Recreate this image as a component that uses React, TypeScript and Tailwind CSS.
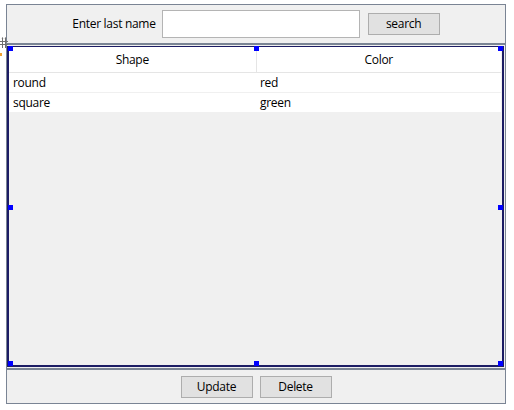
import * as React from "react"

const ROWS = [
  { shape: "round", color: "red" },
  { shape: "square", color: "green" },
]

function Handle({ className }: { className: string }) {
  return <div className={`absolute h-[5px] w-[5px] bg-[#0000ff] ${className}`} />
}

export default function App() {
  return (
    <div
      className="relative h-[410px] w-[514px] bg-white text-[12px] tracking-[-0.3px] text-black"
      style={{ fontFamily: '"Segoe UI", "Open Sans", "Noto Sans", sans-serif' }}
    >
      {/* designer move glyph */}
      <svg className="absolute left-0 top-[33px]" width="8" height="12" viewBox="0 0 8 12">
        <path d="M2.5 1v10M5.5 1v10M0 4.5h8M0 7.5h8" stroke="#6f6f6f" strokeWidth="1" fill="none" />
        <path d="M2.5 0l-1 1.5h2zM5.5 0l-1 1.5h2z" fill="#6f6f6f" />
      </svg>
      <div className="absolute left-0 top-[49px] h-[3px] w-[2px] bg-[#f0a030]" />

      <div className="ml-[6px] mt-[4px] flex h-[400px] w-[500px] flex-col border border-[#7a8494] bg-[#f0f0f0]">
        {/* search bar */}
        <div className="flex h-[38px] shrink-0 items-start justify-center pt-[5px]">
          <span className="mr-[6px] mt-[6px] leading-[16px]">Enter last name</span>
          <input
            type="text"
            className="h-[28px] w-[198px] border border-[#b4b4b4] bg-white px-1 outline-none"
          />
          <button className="ml-[8px] mt-[3px] h-[22px] w-[72px] border border-[#adadad] bg-[#e1e1e1] leading-[18px]">
            search
          </button>
        </div>
        <div className="h-[2px] shrink-0 bg-[#7a8494]" />

        {/* grid */}
        <div className="relative mr-[1px] mt-[1px] h-[321px] shrink-0 border-b-2 border-l-2 border-r-2 border-t border-[#1c1c64]">
          <div className="h-full w-full bg-[#f0f0f0]">
            <table className="w-[492px] table-fixed border-collapse bg-white">
              <thead>
                <tr className="h-[25px] border-b border-[#e5e5e5]">
                  <th className="w-[247px] border-r border-[#e5e5e5] pt-[2px] font-normal">Shape</th>
                  <th className="pt-[2px] font-normal">Color</th>
                </tr>
              </thead>
              <tbody>
                {ROWS.map((r) => (
                  <tr key={r.shape} className="h-[20px] border-b border-[#f0f0f0]">
                    <td className="pl-[4px] pt-[1px] leading-[18px]">{r.shape}</td>
                    <td className="pl-[4px] pt-[1px] leading-[18px]">{r.color}</td>
                  </tr>
                ))}
              </tbody>
            </table>
          </div>
          <Handle className="-left-[1px] -top-[1px]" />
          <Handle className="left-[245px] -top-[1px]" />
          <Handle className="-right-[1px] -top-[1px]" />
          <Handle className="-left-[1px] top-[158px]" />
          <Handle className="-right-[1px] top-[158px]" />
          <Handle className="-left-[1px] -bottom-[1px]" />
          <Handle className="left-[245px] -bottom-[1px]" />
          <Handle className="-right-[1px] -bottom-[1px]" />
        </div>

        <div className="mt-[1px] h-[2px] shrink-0 bg-[#7a8494]" />

        {/* actions */}
        <div className="flex flex-1 items-start justify-center gap-[7px] pt-[6px]">
          <button className="h-[22px] w-[72px] border border-[#adadad] bg-[#e1e1e1] leading-[18px]">Update</button>
          <button className="h-[22px] w-[72px] border border-[#adadad] bg-[#e1e1e1] leading-[18px]">Delete</button>
        </div>
      </div>
    </div>
  )
}
